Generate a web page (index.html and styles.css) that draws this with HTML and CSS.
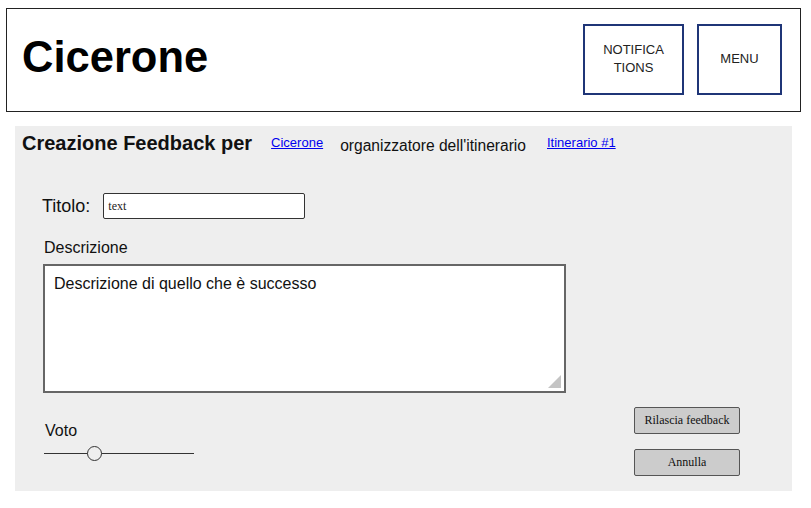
FILE: index.html
```html
<!DOCTYPE html>
<html lang="it">
<head>
<meta charset="utf-8">
<title>Cicerone - Creazione Feedback</title>
<link rel="stylesheet" href="styles.css">
</head>
<body>
<header class="topbar">
  <h1 class="brand">Cicerone</h1>
  <nav class="top-actions">
    <div class="top-btn notif">NOTIFICA<br>TIONS</div>
    <div class="top-btn menu">MENU</div>
  </nav>
</header>
<main class="panel">
  <div class="heading">
    <h2 class="heading-title">Creazione Feedback per</h2>
    <a class="link link-cicerone" href="#">Cicerone</a>
    <span class="heading-role">organizzatore dell'itinerario</span>
    <a class="link link-itin" href="#">Itinerario #1</a>
  </div>
  <div class="content">
    <div class="form">
      <div class="title-row">
        <span class="title-label">Titolo:</span>
        <div class="text-input">text</div>
      </div>
      <div class="desc-label">Descrizione</div>
      <div class="textarea">Descrizione di quello che è successo<span class="grip"></span></div>
      <div class="vote-label">Voto</div>
      <div class="slider"><span class="thumb"></span></div>
    </div>
    <div class="actions">
      <div class="btn">Rilascia feedback</div>
      <div class="btn">Annulla</div>
    </div>
  </div>
</main>
</body>
</html>
```
FILE: styles.css
```css
html, body {
  margin: 0;
  padding: 0;
  background: #ffffff;
  font-family: "Liberation Sans", Arial, sans-serif;
  color: #111;
}

.topbar {
  box-sizing: border-box;
  margin: 8px 0 0 6px;
  width: 795px;
  height: 104px;
  border: 1px solid #222;
  display: flex;
  align-items: center;
  padding: 0 18px 0 15px;
}

.brand {
  margin: 0;
  font-size: 43.5px;
  font-weight: bold;
  line-height: 48px;
  color: #000;
  position: relative;
  top: -3px;
}

.top-actions {
  margin-left: auto;
  display: flex;
  gap: 13px;
  position: relative;
  top: -1px;
}

.top-btn {
  box-sizing: border-box;
  height: 71px;
  border: 2px solid #1f3577;
  display: flex;
  align-items: center;
  justify-content: center;
  text-align: center;
  font-size: 13px;
  line-height: 18px;
  color: #222;
}

.notif { width: 101px; }
.menu { width: 85px; }

.panel {
  box-sizing: border-box;
  margin: 14px 0 0 15px;
  width: 777px;
  height: 365px;
  background: #eeeeee;
  padding: 5px 0 0 7px;
  display: flex;
  flex-direction: column;
}

.heading {
  display: flex;
  align-items: baseline;
  height: 24px;
}

.heading-title {
  margin: 0;
  font-size: 20px;
  line-height: 24px;
  font-weight: bold;
  color: #111;
}

.link {
  font-size: 13px;
  color: #0000ee;
  text-decoration: underline;
  position: relative;
  top: -3px;
}

.link-cicerone { margin-left: 19px; }
.link-itin { margin-left: 21px; }

.heading-role {
  margin-left: 17px;
  font-size: 15.6px;
  color: #111;
  position: relative;
  top: 1px;
}

.content {
  flex: 1;
  display: flex;
}

.form {
  display: flex;
  flex-direction: column;
  padding-left: 20px;
}

.title-row {
  margin-top: 38px;
  display: flex;
  align-items: center;
  height: 26px;
}

.title-label {
  font-size: 18px;
  color: #111;
}

.text-input {
  box-sizing: border-box;
  margin-left: 13px;
  width: 202px;
  height: 26px;
  border: 1px solid #333;
  border-radius: 2px;
  background: #fff;
  font-family: "Liberation Serif", "Times New Roman", serif;
  font-size: 12px;
  line-height: 24px;
  padding-left: 4px;
  color: #222;
}

.desc-label {
  margin: 20px 0 0 2px;
  font-size: 16px;
  line-height: 18px;
  color: #111;
}

.textarea {
  box-sizing: border-box;
  position: relative;
  margin: 7px 0 0 1px;
  width: 523px;
  height: 129px;
  border: 2px solid #666;
  background: #fff;
  font-size: 16px;
  line-height: 18px;
  padding: 9px 0 0 9px;
  color: #111;
}

.grip {
  position: absolute;
  right: 3px;
  bottom: 3px;
  width: 13px;
  height: 13px;
  background: #c4c4c4;
  clip-path: polygon(100% 0, 100% 100%, 0 100%);
}

.vote-label {
  margin: 29px 0 0 3px;
  font-size: 16px;
  line-height: 18px;
  color: #111;
}

.slider {
  position: relative;
  margin: 13px 0 0 2px;
  width: 150px;
  height: 1px;
  background: #333;
}

.thumb {
  position: absolute;
  left: 43px;
  top: -7px;
  box-sizing: border-box;
  width: 15px;
  height: 15px;
  border: 1px solid #333;
  border-radius: 50%;
  background: #eeeeee;
}

.actions {
  margin-left: auto;
  margin-right: 52px;
  padding-top: 252px;
  display: flex;
  flex-direction: column;
  gap: 15px;
}

.btn {
  box-sizing: border-box;
  width: 106px;
  height: 27px;
  border: 1.5px solid #555;
  border-radius: 2px;
  background: #cccccc;
  font-family: "Liberation Serif", "Times New Roman", serif;
  font-size: 12px;
  display: flex;
  align-items: center;
  justify-content: center;
  color: #111;
}
```
